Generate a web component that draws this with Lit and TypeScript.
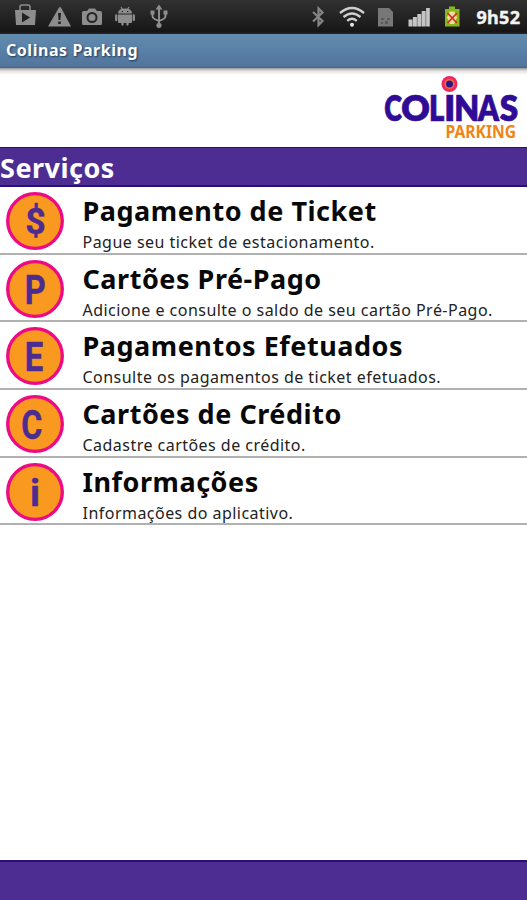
import { LitElement, html, svg, css } from "lit";
import { customElement, property } from "lit/decorators.js";

interface Service {
  glyph: string;
  glyphX: number;
  glyphWidth: number;
  glyphSize: number;
  glyphY: number;
  title: string;
  text: string;
}

const SERVICES: Service[] = [
  { glyph: "$", glyphX: 19.3, glyphWidth: 20.5, glyphSize: 36, glyphY: 42, title: "Pagamento de Ticket", text: "Pague seu ticket de estacionamento." },
  { glyph: "P", glyphX: 18.7, glyphWidth: 21, glyphSize: 41, glyphY: 44, title: "Cartões Pré-Pago", text: "Adicione e consulte o saldo de seu cartão Pré-Pago." },
  { glyph: "E", glyphX: 18.7, glyphWidth: 18.5, glyphSize: 41, glyphY: 44, title: "Pagamentos Efetuados", text: "Consulte os pagamentos de ticket efetuados." },
  { glyph: "C", glyphX: 15.3, glyphWidth: 21, glyphSize: 40, glyphY: 43.5, title: "Cartões de Crédito", text: "Cadastre cartões de crédito." },
  { glyph: "i", glyphX: 24, glyphWidth: 10, glyphSize: 36, glyphY: 42.8, title: "Informações", text: "Informações do aplicativo." },
];

@customElement("status-bar")
class StatusBar extends LitElement {
  static styles = css`
    :host { display: block; height: 34px; background: linear-gradient(#313131, #1c1c1c 75%, #161616 93%, #2d2521); }
    svg { display: block; }
    .clock { font: 700 18px "Noto Sans", sans-serif; fill: #f4f4f4; stroke: #f4f4f4; stroke-width: 0.4px; }
  `;
  render() {
    return html`<svg width="527" height="34" viewBox="0 0 527 34">
      <g fill="#8d8d8d">
        <path d="M15 10h21l-1 15H16z" />
        <path d="M20 10V7q0-2 2-2h6q2 0 2 2v3" fill="none" stroke="#8d8d8d" stroke-width="1.500" />
        <path d="M22 12.500l8 5-8 5z" fill="#222" />
        <path d="M59 7.500q1-1 2 0l10 19H48z" />
        <path d="M58 13h3l-.6 7h-1.800zM58.200 21.500h2.600V24h-2.600z" fill="#222" />
        <path d="M82 12.500q0-1.500 1.500-1.500H87l2-2.500h6l2 2.500h3.500q1.500 0 1.500 1.500v11q0 1.500-1.500 1.500h-17Q82 25 82 23.500z" />
        <circle cx="92" cy="17.500" r="4.500" fill="none" stroke="#252525" stroke-width="2" />
        <path d="M118 13.500q0-5 7-5t7 5zM118 14.500h14v7.500q0 1-1 1h-12q-1 0-1-1z" />
        <path d="M116.200 15.500v4.500M133.800 15.500v4.500M122.500 22v2.500M127.500 22v2.500" stroke="#8d8d8d" stroke-width="2.300" stroke-linecap="round" />
        <path d="M121 7l1.500 2.500M129 7l-1.500 2.500" stroke="#8d8d8d" stroke-width="1.200" />
        <path d="M121.700 11.500h1.300M127 11.500h1.300" stroke="#222" stroke-width="1.200" />
        <path d="M159 8v17M152.500 12v4q0 2 2 3l4.500 2 4.500-2q2-1 2-3v-4" fill="none" stroke="#929292" stroke-width="1.900" />
        <path d="M159 4.500l3.500 5h-7zM150.500 10.500h4v4h-4zM163.500 10.500h4v4h-4z" />
        <circle cx="159" cy="25.300" r="2.600" />
      </g>
      <path d="M313 12l9.500 9-4 4V8.500l4 4-9.500 9" fill="none" stroke="#858585" stroke-width="2.200" />
      <g fill="none" stroke="#cfcfcf" stroke-width="2.300">
        <path d="M340 13q12-10 24 0M343.500 17q8.500-7 17 0M347.200 20.800q4.800-4 9.600 0" />
      </g>
      <circle cx="352" cy="24.700" r="2" fill="#e8e8e8" />
      <path d="M378 8h11l4 4v14.500h-15z" fill="#777" />
      <path d="M381 18h3v2h-3zM387 18h3v2h-3zM381 22h2v2h-2zM385 21h3v3h-3z" fill="#5a5a5a" />
      <path d="M408.500 19.500h4v7h-4zM412.900 17h4v9.500h-4zM417.300 14h4v12.500h-4zM421.700 11h4v15.500h-4zM426.100 8h3.700v18.500h-3.700z" fill="#c5c5c5" />
      <path d="M445 9h4V6.500h6V9h4.500v17.500H445z" fill="#86b71b" />
      <path d="M449.500 11.500h5l2.500 6-3 6.500h-4l-3-6.500z" fill="#e6dfa4" />
      <path d="M447.500 13l9.500 10M457 13l-9.500 10" stroke="#d62f17" stroke-width="1.800" />
      <text class="clock" x="476.500" y="24" textLength="43.500">9h52</text>
    </svg>`;
  }
}

interface LogoLetter {
  char: string;
  x: number;
  width: number;
}

const LOGO_LETTERS: LogoLetter[] = [
  { char: "C", x: 9.3, width: 17.6 },
  { char: "O", x: 26.2, width: 28.6 },
  { char: "L", x: 54, width: 15.3 },
  { char: "I", x: 69.2, width: 11 },
  { char: "N", x: 79.2, width: 25 },
  { char: "A", x: 103, width: 21 },
  { char: "S", x: 124.8, width: 18.4 },
];

@customElement("brand-logo")
class BrandLogo extends LitElement {
  static styles = css`
    :host { display: block; }
    svg { display: block; }
    .name { font: 800 35.5px Lato, sans-serif; fill: #2f0b96; stroke: #2f0b96; stroke-width: 0.7px; stroke-linejoin: round; }
    .tag { font: 700 17.5px "Noto Sans", sans-serif; fill: #f08414; }
  `;
  render() {
    return html`<svg width="152" height="80" viewBox="0 0 152 80">
      ${LOGO_LETTERS.map((l) => svg`<text class="name" y="53" x=${l.x} textLength=${l.width} lengthAdjust="spacingAndGlyphs">${l.char}</text>`)}
      <circle cx="74.500" cy="16" r="8" fill="#f0285f" />
      <circle cx="74.500" cy="16" r="5" fill="#e8742f" />
      <circle cx="74.500" cy="16" r="3.500" fill="#32128c" />
      <text class="tag" x="70.500" y="70" textLength="70.500" lengthAdjust="spacingAndGlyphs">PARKING</text>
    </svg>`;
  }
}

@customElement("service-row")
class ServiceRow extends LitElement {
  @property({ attribute: false }) service!: Service;
  static styles = css`
    :host { display: flex; box-sizing: border-box; height: 67.700px; border-bottom: 2px solid #b1b1b1; padding-left: 6px; }
    .badge { flex: none; width: 58px; height: 58px; margin: 5px 18.500px 0 0; }
    .letter { font-family: Roboto, sans-serif; font-weight: 700; fill: #4d2c91; stroke: #4d2c91; stroke-width: 0.4px; }
    .copy { display: flex; flex-direction: column; white-space: nowrap; color: #080808; font-family: "Noto Sans", sans-serif; }
    .title { font-size: 27px; line-height: 36px; font-weight: 700; margin-top: 6px; letter-spacing: 0.530px; }
    .text { font-size: 16px; line-height: 22px; margin-top: 2px; letter-spacing: 0.470px; color: #222; }
  `;
  render() {
    const s = this.service;
    return html`
      <svg class="badge" viewBox="0 0 58 58">
        <circle cx="29" cy="29" r="27.300" fill="#f9991f" stroke="#ed0a83" stroke-width="3.300" />
        <text class="letter" font-size=${s.glyphSize} x=${s.glyphX} y=${s.glyphY} textLength=${s.glyphWidth} lengthAdjust="spacingAndGlyphs">${s.glyph}</text>
      </svg>
      <div class="copy">
        <div class="title">${s.title}</div>
        <div class="text">${s.text}</div>
      </div>`;
  }
}

@customElement("app-root")
class AppRoot extends LitElement {
  static styles = css`
    :host { display: flex; flex-direction: column; width: 527px; height: 900px; overflow: hidden; background: #fff; font-family: "Noto Sans", sans-serif; }
    .titlebar { box-sizing: border-box; height: 34px; padding-left: 6px; background: linear-gradient(#628bb0, #52759c 94%, #486487); color: #fff; font-size: 16px; font-weight: 700; line-height: 33px; letter-spacing: 0.550px; text-shadow: 1px 1px 2px #1d3658; }
    .brand { box-sizing: border-box; height: 79px; display: flex; justify-content: flex-end; background: linear-gradient(#999, #e3e3e3 3px, #fff 7px); }
    .heading { box-sizing: border-box; height: 40px; background: #4d2d91; border: solid #271078; border-width: 1px 0 2px; color: #fff; font-size: 27px; font-weight: 700; line-height: 39px; letter-spacing: 0.500px; }
    .list { flex: 1; }
    .footer { box-sizing: border-box; height: 40px; background: #4d2d91; border-top: 2px solid #271078; }
  `;
  render() {
    return html`
      <status-bar></status-bar>
      <div class="titlebar">Colinas Parking</div>
      <div class="brand"><brand-logo></brand-logo></div>
      <div class="heading">Serviços</div>
      <div class="list">${SERVICES.map((s) => html`<service-row .service=${s}></service-row>`)}</div>
      <div class="footer"></div>`;
  }
}
